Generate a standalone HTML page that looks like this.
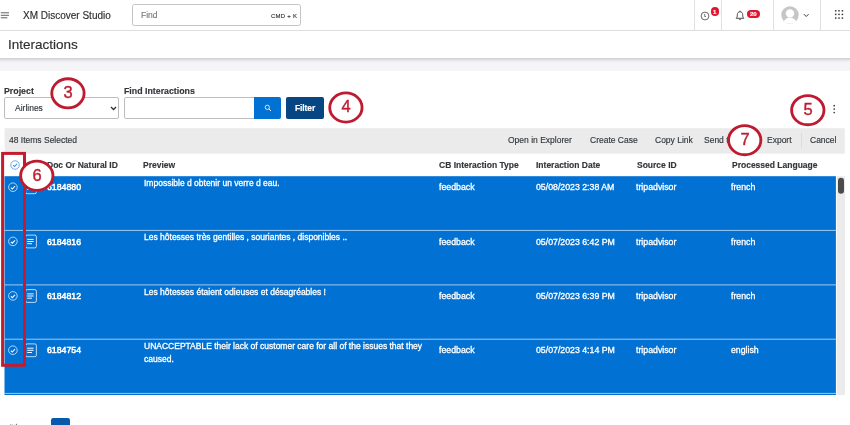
<!DOCTYPE html>
<html>
<head>
<meta charset="utf-8">
<title>XM Discover Studio - Interactions</title>
<style>
*{box-sizing:border-box;margin:0;padding:0}
html,body{width:850px;height:425px;overflow:hidden;background:#fff}
body{font-family:"Liberation Sans",sans-serif;color:#32363a;position:relative;font-size:8.5px}
.abs{position:absolute}
.t{position:absolute;white-space:nowrap;line-height:1;font-size:8.5px;will-change:transform;-webkit-text-stroke:0.15px}
.t.w{color:#fff;-webkit-text-stroke:0.3px #fff}
.t.dg{width:20px;text-align:center;font-size:16.5px;color:transparent;background:#be1b30;-webkit-background-clip:text;background-clip:text;-webkit-text-stroke:0.42px transparent}
.t.b{font-weight:normal;font-size:8.75px;-webkit-text-stroke:0.5px #fff}
.t.c{font-size:8.75px}
/* top bar */
#top{left:0;top:0;width:850px;height:31px;background:#fff;border-bottom:1px solid #dedede}
.vsep{position:absolute;top:0;width:1px;height:30px;background:#e0e0e0}
#search{left:132px;top:4px;width:169px;height:22px;border:1px solid #c4c4c4;border-radius:2.5px;background:#fff}
/* title bar */
#titlebar{left:0;top:31px;width:850px;height:27px;background:#fff}
#band{left:0;top:58px;width:850px;height:13.5px;background:linear-gradient(to bottom,#d2d2d4 0,#d4d4d6 .8px,#e6e6e8 2.2px,#f1f1f3 4px,#f5f5f7 5.5px,#f5f5f7 12.4px,#fff 13.5px)}
/* filter controls */
.inp{position:absolute;top:97.3px;height:21.5px;border:1px solid #bdbdbd;border-radius:2px;background:#fff}
/* actions bar */
/* table */
.hd{font-weight:bold;color:#32363a}
/* annotations */
</style>
</head>
<body>

<!-- TOP BAR -->
<div id="top" class="abs"></div>
<svg class="abs" style="left:0;top:11px" width="11" height="9" viewBox="0 0 11 9"><path d="M0.8 1.8h8.2M0.8 4.3h8.2M0.8 6.8h6.6" stroke="#595959" stroke-width="0.95" fill="none"/></svg>
<div class="t" style="left:22.6px;top:11.2px;font-size:10px;color:#2e2e2e">XM Discover Studio</div>
<div id="search" class="abs"></div>
<div class="t" style="left:141px;top:11.3px;font-size:8.5px;color:#7a7a7a">Find</div>
<div class="t" style="left:270.8px;top:13px;font-size:6px;letter-spacing:.25px;color:#333">CMD + K</div>

<div class="vsep" style="left:694px"></div>
<div class="vsep" style="left:721px"></div>
<div class="vsep" style="left:773px"></div>
<div class="vsep" style="left:820px"></div>

<!-- clock icon + badge -->
<svg class="abs" style="left:699.8px;top:10.9px" width="10" height="10" viewBox="0 0 10 10"><circle cx="5" cy="5" r="3.9" fill="none" stroke="#444" stroke-width="0.8"/><path d="M4.7 3v2.5h1.3" fill="none" stroke="#444" stroke-width="0.7"/></svg>
<div class="abs" style="left:710.7px;top:7.2px;width:8.5px;height:8.5px;border-radius:50%;background:#e0152f"></div>
<div class="t" style="left:713.1px;top:8.5px;font-size:6px;font-weight:bold;color:#fff">1</div>

<!-- bell icon + badge -->
<svg class="abs" style="left:734.6px;top:9.5px" width="10" height="11" viewBox="0 0 10 11"><path d="M5 0.7v0.9M1.2 8.3h7.6c-0.9-0.9-1.1-1.6-1.1-3.6c0-1.8-1.2-3-2.7-3s-2.7 1.2-2.7 3c0 2-0.2 2.7-1.1 3.6z" fill="none" stroke="#3a3a3a" stroke-width="0.9" stroke-linejoin="round"/><path d="M4 9.1c0.2 0.6 0.6 0.9 1 0.9s0.8-0.3 1-0.9z" fill="#3a3a3a"/></svg>
<div class="abs" style="left:747.2px;top:9.5px;width:13.2px;height:8.3px;border-radius:4.2px;background:#e0152f"></div>
<div class="t" style="left:750.3px;top:10.7px;font-size:6px;font-weight:bold;color:#fff">20</div>

<!-- avatar -->
<svg class="abs" style="left:781.2px;top:6.3px" width="18" height="18" viewBox="0 0 18 18"><defs><clipPath id="av"><circle cx="9" cy="9" r="8.7"/></clipPath></defs><circle cx="9" cy="9" r="8.7" fill="#c6c6c6"/><g clip-path="url(#av)" fill="#fff"><circle cx="9" cy="7.4" r="4.2"/><ellipse cx="9" cy="19" rx="7.2" ry="7.6"/></g></svg>
<svg class="abs" style="left:803.4px;top:13.1px" width="7" height="5" viewBox="0 0 7 5"><path d="M0.8 1.1l2.4 2.4 2.4-2.4" fill="none" stroke="#333" stroke-width="0.95"/></svg>

<!-- app grid -->
<svg class="abs" style="left:833.9px;top:9.1px" width="10" height="11" viewBox="0 0 10 11"><g fill="#3a3a3a"><rect x="0.95" y="1.05" width="1.5" height="1.5"/><rect x="4.25" y="1.05" width="1.5" height="1.5"/><rect x="7.65" y="1.05" width="1.5" height="1.5"/><rect x="0.95" y="4.65" width="1.5" height="1.5"/><rect x="4.25" y="4.65" width="1.5" height="1.5"/><rect x="7.65" y="4.65" width="1.5" height="1.5"/><rect x="0.95" y="8.35" width="1.5" height="1.5"/><rect x="4.25" y="8.35" width="1.5" height="1.5"/><rect x="7.65" y="8.35" width="1.5" height="1.5"/></g></svg>

<!-- TITLE BAR -->
<div id="band" class="abs"></div>
<div id="titlebar" class="abs"></div>
<div class="t" style="left:7.9px;top:37.7px;font-size:13.5px;color:#2e2e2e">Interactions</div>

<!-- FILTER CONTROLS -->
<div class="t hd" style="left:4.4px;top:86.7px;font-size:8.8px">Project</div>
<div class="inp" style="left:4.3px;width:115px"></div>
<div class="t" style="left:15.2px;top:103.9px">Airlines</div>
<svg class="abs" style="left:110px;top:106px" width="7" height="5" viewBox="0 0 7 5"><path d="M1 1l2.5 2.5L6 1" fill="none" stroke="#2e2e2e" stroke-width="1.25"/></svg>
<div class="t hd" style="left:124.1px;top:86.7px;font-size:8.8px">Find Interactions</div>
<div class="inp" style="left:124.3px;width:131px;border-radius:2px 0 0 2px"></div>
<div class="abs" style="left:254px;top:97.3px;width:27.4px;height:21.5px;background:#0271d4;border-radius:0 2px 2px 0"></div>
<svg class="abs" style="left:263.6px;top:104.3px" width="8" height="8" viewBox="0 0 8 8"><circle cx="3.3" cy="3.3" r="2.15" fill="none" stroke="#fff" stroke-width="0.8"/><path d="M4.9 4.9l2.1 2.1" stroke="#fff" stroke-width="1" fill="none"/></svg>
<div class="abs" style="left:285.9px;top:97.3px;width:38.5px;height:21.5px;background:#054683;border-radius:2px"></div>
<div class="t" style="left:295px;top:104px;font-size:8.5px;font-weight:bold;color:#fff;letter-spacing:-.1px">Filter</div>

<!-- kebab -->
<svg class="abs" style="left:832px;top:104px" width="5" height="11" viewBox="0 0 5 11"><g fill="#3a3a3a"><circle cx="2.2" cy="1.7" r="0.85"/><circle cx="2.2" cy="5.1" r="0.85"/><circle cx="2.2" cy="8.5" r="0.85"/></g></svg>

<!-- ACTIONS BAR -->
<svg class="abs" style="left:0;top:126px" width="850" height="30" viewBox="0 126 850 30"><rect x="4.6" y="128.2" width="840.2" height="25.5" fill="#ebebeb"/></svg>
<div class="t" style="left:8.7px;top:136.4px">48 Items Selected</div>
<div class="t" style="left:508.4px;top:136.4px">Open in Explorer</div>
<div class="t" style="left:589.9px;top:136.4px">Create Case</div>
<div class="t" style="left:654.8px;top:136.4px">Copy Link</div>
<div class="t" style="left:704.3px;top:136.4px">Send to</div>
<div class="abs" style="left:760px;top:133px;width:1px;height:15px;background:#dcdcdc"></div>
<div class="t" style="left:767.3px;top:136.4px">Export</div>
<div class="abs" style="left:801px;top:133px;width:1px;height:15px;background:#dcdcdc"></div>
<div class="t" style="left:810.1px;top:136.4px">Cancel</div>

<!-- TABLE HEADER -->
<svg class="abs" style="left:9.7px;top:159.8px" width="10" height="10" viewBox="0 0 10 10"><circle cx="5" cy="5" r="4.25" fill="none" stroke="#5a9ee6" stroke-width="0.85"/><path d="M3.1 5.1l1.4 1.4 2.5-2.7" fill="none" stroke="#3f8de0" stroke-width="1.05"/></svg>
<div class="t hd" style="left:47.4px;top:160.9px">Doc Or Natural ID</div>
<div class="t hd" style="left:143.3px;top:160.9px">Preview</div>
<div class="t hd" style="left:439.4px;top:160.9px">CB Interaction Type</div>
<div class="t hd" style="left:536.2px;top:160.9px">Interaction Date</div>
<div class="t hd" style="left:637px;top:160.9px">Source ID</div>
<div class="t hd" style="left:732px;top:160.9px">Processed Language</div>

<!-- ROWS -->
<svg class="abs" style="left:0;top:0" width="850" height="425" viewBox="0 0 850 425">
<rect x="4.5" y="176.2" width="831.4" height="218.8" fill="#0271d4"/>
<rect x="4.5" y="229.9" width="831.4" height="1" fill="#fff" fill-opacity="0.62"/>
<rect x="4.5" y="284.4" width="831.4" height="1" fill="#fff" fill-opacity="0.62"/>
<rect x="4.5" y="338.7" width="831.4" height="1" fill="#fff" fill-opacity="0.62"/>
<rect x="4.5" y="392.9" width="831.4" height="1" fill="#fff" fill-opacity="0.62"/>
<rect x="837" y="176.2" width="8" height="218.8" fill="#ebebeb"/>
<rect x="838" y="177.7" width="6" height="16" rx="3" fill="#4b4b4b"/>
<g fill="none" stroke="#fff"><circle cx="12.9" cy="187.2" r="4.3" stroke-width="0.75" stroke-opacity="0.92"/><path d="M10.9 187.6l1.4 1.4 2.7-2.8" stroke-width="1.05"/></g>
<g fill="none" stroke="#fff"><rect x="25.6" y="180.9" width="10.8" height="12.8" rx="1.6" stroke-width="0.8" stroke-opacity="0.92"/><path d="M27.2 185.2h6.4M27.2 187.3h6.4M27.2 189.5h4.8" stroke-width="0.95"/></g>
<g fill="none" stroke="#fff"><circle cx="12.9" cy="241.4" r="4.3" stroke-width="0.75" stroke-opacity="0.92"/><path d="M10.9 241.8l1.4 1.4 2.7-2.8" stroke-width="1.05"/></g>
<g fill="none" stroke="#fff"><rect x="25.6" y="235.1" width="10.8" height="12.8" rx="1.6" stroke-width="0.8" stroke-opacity="0.92"/><path d="M27.2 239.4h6.4M27.2 241.5h6.4M27.2 243.7h4.8" stroke-width="0.95"/></g>
<g fill="none" stroke="#fff"><circle cx="12.9" cy="295.9" r="4.3" stroke-width="0.75" stroke-opacity="0.92"/><path d="M10.9 296.3l1.4 1.4 2.7-2.8" stroke-width="1.05"/></g>
<g fill="none" stroke="#fff"><rect x="25.6" y="289.6" width="10.8" height="12.8" rx="1.6" stroke-width="0.8" stroke-opacity="0.92"/><path d="M27.2 293.9h6.4M27.2 296.0h6.4M27.2 298.2h4.8" stroke-width="0.95"/></g>
<g fill="none" stroke="#fff"><circle cx="12.9" cy="350.2" r="4.3" stroke-width="0.75" stroke-opacity="0.92"/><path d="M10.9 350.6l1.4 1.4 2.7-2.8" stroke-width="1.05"/></g>
<g fill="none" stroke="#fff"><rect x="25.6" y="343.9" width="10.8" height="12.8" rx="1.6" stroke-width="0.8" stroke-opacity="0.92"/><path d="M27.2 348.2h6.4M27.2 350.3h6.4M27.2 352.5h4.8" stroke-width="0.95"/></g>
</svg>
<!-- row 6184880 -->
<div class="t w b" style="left:47.3px;top:183.4px">6184880</div>
<div class="t w" style="left:143.7px;top:179.1px">Impossible d obtenir un verre d eau.</div>
<div class="t w c" style="left:439.2px;top:183.4px">feedback</div>
<div class="t w c" style="left:535.5px;top:183.4px">05/08/2023 2:38 AM</div>
<div class="t w c" style="left:635.9px;top:183.4px">tripadvisor</div>
<div class="t w c" style="left:731.3px;top:183.4px">french</div>
<!-- row 6184816 -->
<div class="t w b" style="left:47.3px;top:237.6px">6184816</div>
<div class="t w" style="left:143.7px;top:233.3px">Les hôtesses très gentilles , souriantes , disponibles ..</div>
<div class="t w c" style="left:439.2px;top:237.6px">feedback</div>
<div class="t w c" style="left:535.5px;top:237.6px">05/07/2023 6:42 PM</div>
<div class="t w c" style="left:635.9px;top:237.6px">tripadvisor</div>
<div class="t w c" style="left:731.3px;top:237.6px">french</div>
<!-- row 6184812 -->
<div class="t w b" style="left:47.3px;top:292.1px">6184812</div>
<div class="t w" style="left:143.7px;top:287.8px">Les hôtesses étaient odieuses et désagréables !</div>
<div class="t w c" style="left:439.2px;top:292.1px">feedback</div>
<div class="t w c" style="left:535.5px;top:292.1px">05/07/2023 6:39 PM</div>
<div class="t w c" style="left:635.9px;top:292.1px">tripadvisor</div>
<div class="t w c" style="left:731.3px;top:292.1px">french</div>
<!-- row 6184754 -->
<div class="t w b" style="left:47.3px;top:346.4px">6184754</div>
<div class="t w" style="left:143.7px;top:342.1px">UNACCEPTABLE their lack of customer care for all of the issues that they</div>
<div class="t w" style="left:143.7px;top:354.9px">caused.</div>
<div class="t w c" style="left:439.2px;top:346.4px">feedback</div>
<div class="t w c" style="left:535.5px;top:346.4px">05/07/2023 4:14 PM</div>
<div class="t w c" style="left:635.9px;top:346.4px">tripadvisor</div>
<div class="t w c" style="left:731.3px;top:346.4px">english</div>

<!-- PAGINATION (cut off at bottom edge) -->
<div class="abs" style="left:51px;top:418px;width:19px;height:12px;background:#0659ab;border-radius:2.2px 2.2px 0 0"></div>
<svg class="abs" style="left:8px;top:421px" width="12" height="4" viewBox="0 0 12 4"><path d="M2.4 3v1M3.9 4l0.6-0.8" stroke="#9a9a9a" stroke-width="0.8" fill="none"/><path d="M8.1 4l0.6-1.2" stroke="#555" stroke-width="0.9" fill="none"/></svg>

<!-- ANNOTATIONS -->
<svg class="abs" style="left:0;top:148px" width="30" height="222" viewBox="0 148 30 222"><rect x="2.6" y="153.4" width="21.9" height="211.9" fill="none" stroke="#c41c2e" stroke-width="3"/></svg>
<svg class="abs cs" style="left:47px;top:75px" width="40" height="36" viewBox="47 75 40 36"><ellipse cx="67.95" cy="93.35" rx="16.17" ry="14.57" fill="#fff" stroke="#be1b30" stroke-width="2.85"/></svg><div class="t dg" style="left:57.90px;top:83.93px">3</div>
<svg class="abs cs" style="left:325px;top:89px" width="40" height="36" viewBox="325 89 40 36"><ellipse cx="345.9" cy="107.5" rx="16.17" ry="14.57" fill="#fff" stroke="#be1b30" stroke-width="2.85"/></svg><div class="t dg" style="left:335.85px;top:98.08px">4</div>
<svg class="abs cs" style="left:787px;top:92px" width="40" height="36" viewBox="787 92 40 36"><ellipse cx="807.8" cy="110.2" rx="16.17" ry="14.57" fill="#fff" stroke="#be1b30" stroke-width="2.85"/></svg><div class="t dg" style="left:797.75px;top:100.78px">5</div>
<svg class="abs cs" style="left:16px;top:157px" width="40" height="36" viewBox="16 157 40 36"><ellipse cx="36.8" cy="175.75" rx="16.17" ry="14.57" fill="#fff" stroke="#be1b30" stroke-width="2.85"/></svg><div class="t dg" style="left:26.75px;top:166.9px">6</div>
<svg class="abs cs" style="left:724px;top:122px" width="40" height="36" viewBox="724 122 40 36"><ellipse cx="744.7" cy="140.2" rx="16.17" ry="14.57" fill="#fff" stroke="#be1b30" stroke-width="2.85"/></svg><div class="t dg" style="left:734.65px;top:130.78px">7</div>

</body>
</html>
